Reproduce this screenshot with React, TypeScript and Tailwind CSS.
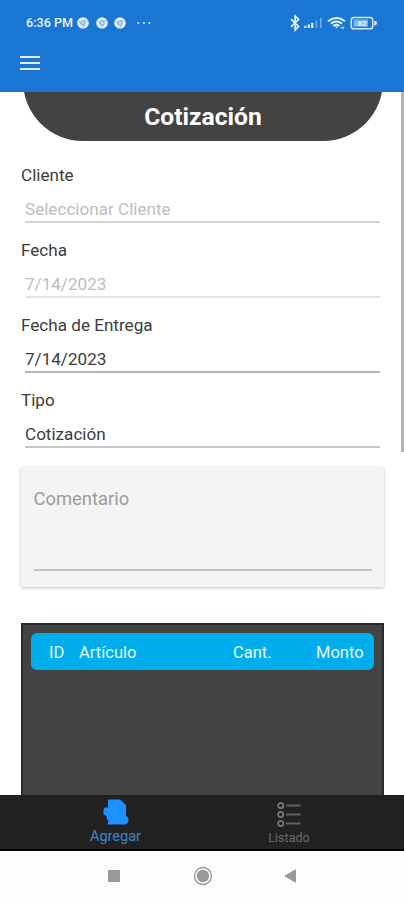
import React from "react";

function ChromeIcon() {
  return (
    <svg viewBox="0 0 12 12" className="h-3 w-3">
      <circle cx="6" cy="6" r="5.8" fill="#e6f1fc" />
      <circle cx="6" cy="6" r="2.2" fill="#c5def7" stroke="#5f9fe2" strokeWidth="0.9" />
      <path d="M6 3.8H10.6M4.1 7.1L1.9 3.4M7.9 7.1L5.7 11" stroke="#7fb3ea" strokeWidth="0.8" />
    </svg>
  );
}

function StatusBar() {
  return (
    <div className="flex h-[46px] items-center pl-[26px] pr-[26px] text-white">
      <span className="w-[51px] whitespace-nowrap text-[12.6px] font-medium leading-none text-[#e8f3ff]">6:36 PM</span>
      <div className="flex gap-[6.7px]">
        <ChromeIcon />
        <ChromeIcon />
        <ChromeIcon />
      </div>
      <svg viewBox="0 0 14 4" className="ml-[11px] h-1 w-[14px]" fill="#d6e9fd">
        <circle cx="1.3" cy="2" r="1.1" />
        <circle cx="6.9" cy="2" r="1.1" />
        <circle cx="12.4" cy="2" r="1.1" />
      </svg>
      <svg viewBox="0 0 88 18" className="ml-auto h-[18px] w-[88px]" fill="none">
        <path d="M1 5.2L8.6 12.4L5.1 16V2L8.6 5.6L1 12.8" stroke="#e2f0ff" strokeWidth="1.7" />
        <path d="M15.4 14V11.8M18.8 14V10.6M22.2 14V8.8" stroke="#e2f0ff" strokeWidth="2.2" />
        <path d="M26.4 14V6.4M30.8 14V3.8" stroke="#6facec" strokeWidth="1.6" />
        <path d="M38 7.3Q46.5 .8 55 7.3M40.8 9.8Q46.5 5.3 52 9.8M43.3 12Q46.5 9.6 49.5 12" stroke="#e2f0ff" strokeWidth="1.9" />
        <path d="M44.6 12.5L46.5 14.6L48.3 12.5Z" fill="#e2f0ff" />
        <path d="M50 13.8H54M52.4 12.2L54 13.8L52.4 15.4" stroke="#b9daf9" strokeWidth="1" />
        <rect x="61.3" y="3.4" width="21.4" height="11.4" rx="2.6" stroke="#d6e9fd" strokeWidth="1.5" />
        <rect x="63.5" y="5.5" width="14.5" height="7.2" fill="#7db5ef" />
        <path d="M84.2 6.8Q87 6.8 87 9.1Q87 11.4 84.2 11.4Z" fill="#d6e9fd" />
        <text x="72" y="12" textAnchor="middle" fontSize="8" fontWeight="700" fontFamily="Roboto, sans-serif" fill="#e9f4ff">82</text>
      </svg>
    </div>
  );
}

function Field({ label, value, muted, lineClass }: { label: string; value: string; muted?: boolean; lineClass: string }) {
  return (
    <div className="h-[75px]">
      <div className="h-[30px] whitespace-nowrap pl-[21px] text-[17.1px] leading-[30px] text-[#3c3c3c]">{label}</div>
      <div className={"ml-[25px] mr-6 h-[33px] whitespace-nowrap border-b-2 pt-1 text-[17.1px] leading-[30px] " + lineClass + (muted ? " text-[#bdbdbd]" : " text-[#3c3c3c]")}>
        {value}
      </div>
    </div>
  );
}

export default function App() {
  return (
    <div className="flex h-[900px] w-[404px] flex-col overflow-hidden bg-white font-[Roboto,sans-serif]">
      <header className="h-[92px] shrink-0 bg-[#1976d2]">
        <StatusBar />
        <div className="flex flex-col gap-1 pl-5 pt-[10px]">
          <div className="h-[2px] w-[19.5px] bg-[#e0effd]" />
          <div className="h-[2px] w-[19.5px] bg-[#e0effd]" />
          <div className="h-[2px] w-[19.5px] bg-[#e0effd]" />
        </div>
      </header>

      <main className="flex min-h-0 flex-1 overflow-hidden">
        <div className="w-[401px] shrink-0">
          <div className="-mt-5 ml-[23px] h-[69px] w-[360px] rounded-b-[60px] bg-[#434343] pt-5 text-center text-[24.6px] font-bold leading-[50px] text-white">
            Cotización
          </div>
          <div className="-mr-[3px] pt-[19px]">
            <Field label="Cliente" value="Seleccionar Cliente" muted lineClass="border-[#d4d4d4]" />
            <Field label="Fecha" value="7/14/2023" muted lineClass="border-[#e3e3e3]" />
            <Field label="Fecha de Entrega" value="7/14/2023" lineClass="border-[#b4b4b4]" />
            <Field label="Tipo" value="Cotización" lineClass="border-[#c6c6c6]" />
          </div>
          <section className="ml-[21px] mt-[7px] h-[120px] w-[363px] bg-[#f4f4f4] px-[12.5px] shadow-[0_1px_3px_rgba(0,0,0,0.24)]">
            <div className="h-[104px] border-b-2 border-[#c4c4c4] pt-[17px] text-[18.4px] leading-[30px] text-[#9c9c9c]">Comentario</div>
          </section>
          <section className="ml-[21px] mt-9 h-[200px] w-[363px] border-2 border-[#292929] bg-[#434343] px-2 pt-2">
            <div className="flex h-[37px] items-center rounded-[6px] bg-[#00adec] pt-[3px] text-[16.5px] text-[#e3f7ff]">
              <span className="w-[31px] pl-[18px]">ID</span>
              <span className="w-[154px] pl-[17px]">Artículo</span>
              <span className="w-[83px] pl-[17px]">Cant.</span>
              <span className="pl-[17px]">Monto</span>
            </div>
          </section>
        </div>
        <div className="h-[360px] w-[3px] shrink-0 bg-[#b3b3b3]" />
      </main>

      <nav className="flex h-14 shrink-0 border-b-2 border-black bg-[#212121]">
        <div className="flex w-[231px] flex-col items-center pt-[4px] text-[14.5px] leading-4 text-[#3f85cc]">
          <svg viewBox="0 0 26 26" className="h-[26px] w-[26px]" fill="#1e90ff">
            <path d="M5 .5H17L23 6V17C26.5 18 26.5 24.5 22 25.5H5V21L3.5 20V17L.5 15.5V10L2 8.500H5Z" />
          </svg>
          <span className="pt-1">Agregar</span>
        </div>
        <div className="flex w-[116px] flex-col items-center text-[12.5px] leading-4 text-[#6a6a6a]">
          <svg viewBox="0 0 24 26" className="mt-[7px] h-[26px] w-6" fill="none" stroke="#777" strokeWidth="1.8">
            <circle cx="3.7" cy="3.5" r="2.6" />
            <circle cx="3.7" cy="12.5" r="2.6" />
            <circle cx="3.7" cy="21.5" r="2.6" />
            <path d="M9 3.5H23.5M9 12.5H23.5M9 21.5H23.5" stroke="#616161" strokeWidth="2" />
          </svg>
          <span className="pt-[2px]">Listado</span>
        </div>
      </nav>

      <div className="flex h-[49px] shrink-0 items-center bg-[#fdfdfd] pl-[108px]">
        <div className="h-[12px] w-[12px] bg-[#999]" />
        <svg viewBox="0 0 20 20" className="ml-[73px] h-5 w-5">
          <circle cx="10" cy="10" r="8.5" fill="none" stroke="#999" strokeWidth="1.4" />
          <circle cx="10" cy="10" r="6.2" fill="#999" />
        </svg>
        <svg viewBox="0 0 12 14" className="ml-[71px] h-[14px] w-3">
          <path d="M12 0V14L0 7Z" fill="#999" />
        </svg>
      </div>
    </div>
  );
}
